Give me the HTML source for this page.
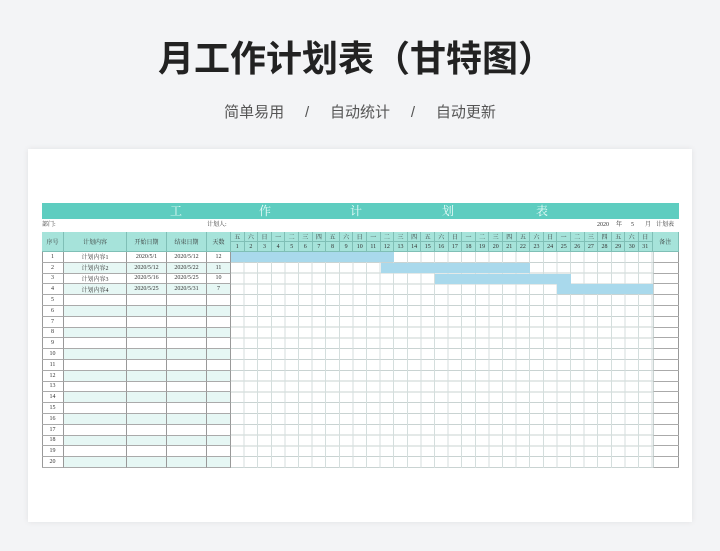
<!DOCTYPE html>
<html><head><meta charset="utf-8">
<style>
*{margin:0;padding:0;box-sizing:border-box}
body{width:720px;height:551px;background:#f3f4f6;position:relative;overflow:hidden;font-family:"Liberation Serif","Noto Serif CJK SC",serif}
.t{position:absolute;left:0;width:712px;text-align:center;top:30px;font:bold 36px "Liberation Sans","Noto Sans CJK SC",sans-serif;color:#222}
.s{position:absolute;left:0;width:720px;text-align:center;top:101px;font:15px "Liberation Sans","Noto Sans CJK SC",sans-serif;color:#555;white-space:pre}
.card{position:absolute;left:28px;top:149px;width:664px;height:373px;background:#fff;box-shadow:0 0 6px rgba(0,0,0,.08)}
.a{position:absolute}
.bar{background:#5ecdc0;left:42px;top:203px;width:637px;height:16px;color:#e8fbf8;font-size:12px}
.bar span{position:absolute;top:0;line-height:16px}
.info{font-size:6px;line-height:10px;height:10px;color:#333;top:220px;white-space:nowrap}
.c{position:absolute;font-size:6px;color:#333;text-align:center;border-right:1px solid #999;border-bottom:1px solid #aaa;display:flex;align-items:center;justify-content:center}
.h{background:#a6e3da;border-color:#7fbfb6}
.grid{left:231px;top:252px;width:422px;height:216px;
background-image:repeating-linear-gradient(90deg,transparent 0,transparent 12.6px,#d4dedd 12.6px,#d4dedd 13.6px),repeating-linear-gradient(180deg,transparent 0,transparent 9.8px,#c9d3d2 9.8px,#c9d3d2 10.8px)}
.g{position:absolute;background:#a9d9ec;height:10px}
</style></head><body>
<div class="t">月工作计划表（甘特图）</div>
<div class="s">简单易用     /     自动统计     /     自动更新</div>
<div class="card"></div>
<div class="a bar"><span style="left:128px">工</span><span style="left:217px">作</span><span style="left:308px">计</span><span style="left:400px">划</span><span style="left:494px">表</span></div>
<div class="a info" style="left:42px">部门:</div>
<div class="a info" style="left:207px">计划人:</div>
<div class="a info" style="left:597px">2020</div>
<div class="a info" style="left:616px">年</div>
<div class="a info" style="left:631px">5</div>
<div class="a info" style="left:645px">月</div>
<div class="a info" style="left:656px">计划表</div>
<div class="a" style="left:42px;top:232px;width:637px;height:236px;border-left:1px solid #999;border-top:1px solid #7fbfb6;border-bottom:1px solid #999;border-right:1px solid #999"></div>
<div class="a grid"></div>
<div id="root"></div>
<script>
var H='';
var cols=[[42,22,'序号'],[64,63,'计划内容'],[127,40,'开始日期'],[167,40,'结束日期'],[207,24,'天数']];
cols.forEach(function(c){H+='<div class="c h" style="left:'+c[0]+'px;top:232px;width:'+c[1]+'px;height:20px">'+c[2]+'</div>';});
H+='<div class="c h" style="left:652.6px;top:232px;width:26.4px;height:20px">备注</div>';
var w='五六日一二三四';
for(var d=0;d<31;d++){var x=231+d*13.6;
H+='<div class="c h" style="left:'+x+'px;top:232px;width:13.6px;height:10px">'+w[d%7]+'</div>';
H+='<div class="c h" style="left:'+x+'px;top:242px;width:13.6px;height:10px">'+(d+1)+'</div>';}
var data=[['计划内容1','2020/5/1','2020/5/12','12'],['计划内容2','2020/5/12','2020/5/22','11'],['计划内容3','2020/5/16','2020/5/25','10'],['计划内容4','2020/5/25','2020/5/31','7']];
for(var r=0;r<20;r++){var y=252+r*10.8;var dd=data[r]||['','','',''];var bg=(r%2==1)?'background:#e6f7f4;':'';
H+='<div class="c" style="left:42px;top:'+y+'px;width:22px;height:10.8px">'+(r+1)+'</div>';
for(var k=1;k<5;k++){var c=cols[k];H+='<div class="c" style="'+bg+'left:'+c[0]+'px;top:'+y+'px;width:'+c[1]+'px;height:10.8px">'+dd[k-1]+'</div>';}
H+='<div class="c" style="left:652.6px;top:'+y+'px;width:26.4px;height:10.8px;border-right:none;border-left:1px solid #c9d3d2"></div>';}
var bars=[[1,12],[12,22],[16,25],[25,31]];
bars.forEach(function(b,i){H+='<div class="g" style="left:'+(231+(b[0]-1)*13.6)+'px;top:'+(252+i*10.8)+'px;width:'+((b[1]-b[0]+1)*13.6)+'px"></div>';});
document.getElementById('root').innerHTML=H;
</script>
</body></html>
